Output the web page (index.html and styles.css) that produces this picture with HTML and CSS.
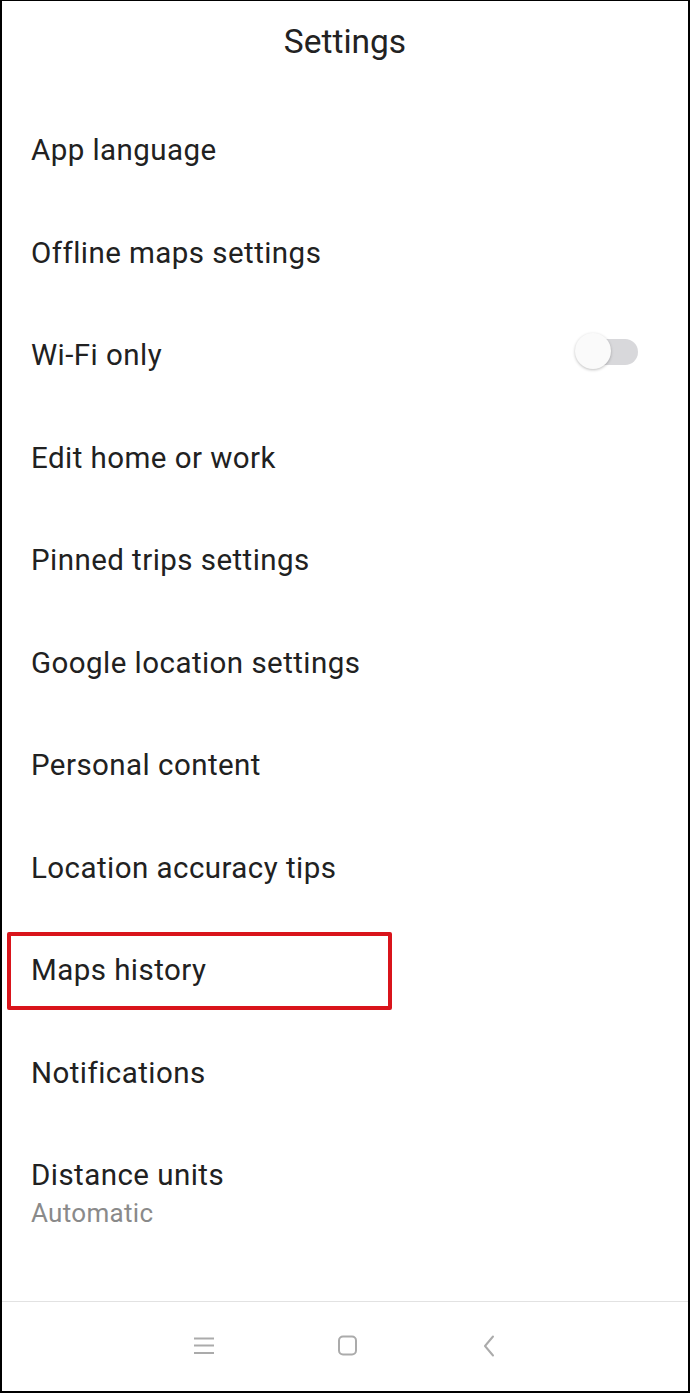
FILE: index.html
```html
<!DOCTYPE html>
<html lang="en">
<head>
<meta charset="utf-8">
<title>Settings</title>
<link rel="stylesheet" href="styles.css">
</head>
<body>
<div class="screen">
  <header class="header">
    <h1 class="title">Settings</h1>
  </header>
  <ul class="list">
    <li class="row"><span class="label">App language</span></li>
    <li class="row"><span class="label">Offline maps settings</span></li>
    <li class="row">
      <span class="label">Wi-Fi only</span>
      <span class="toggle"><span class="track"></span><span class="knob"></span></span>
    </li>
    <li class="row"><span class="label">Edit home or work</span></li>
    <li class="row"><span class="label">Pinned trips settings</span></li>
    <li class="row"><span class="label">Google location settings</span></li>
    <li class="row"><span class="label">Personal content</span></li>
    <li class="row"><span class="label">Location accuracy tips</span></li>
    <li class="row row-highlight"><span class="label">Maps history</span></li>
    <li class="row"><span class="label">Notifications</span></li>
    <li class="row row-two">
      <span class="label">Distance units</span>
      <span class="sub">Automatic</span>
    </li>
  </ul>
  <nav class="navbar">
    <svg class="nav-icon" width="22" height="20" viewBox="0 0 22 20">
      <path d="M1 2.5H21M1 9.5H21M1 17H21" stroke="#ababab" stroke-width="1.8" fill="none"/>
    </svg>
    <svg class="nav-icon" width="22" height="22" viewBox="0 0 22 22">
      <rect x="2" y="1.5" width="17" height="18" rx="4" stroke="#ababab" stroke-width="2" fill="none"/>
    </svg>
    <svg class="nav-icon" width="16" height="22" viewBox="0 0 16 22">
      <path d="M12 1.5L4 11L12 20.5" stroke="#ababab" stroke-width="2" fill="none" stroke-linecap="round" stroke-linejoin="round"/>
    </svg>
  </nav>
</div>
</body>
</html>
```

FILE: styles.css
```css
*, *::before, *::after { box-sizing: border-box; }
html, body { margin: 0; padding: 0; background: #fff; }
.screen {
  width: 690px;
  height: 1393px;
  border: 2px solid #000;
  border-top-width: 1px;
  display: flex;
  flex-direction: column;
  background: #fff;
  font-family: Roboto, "Noto Sans", sans-serif;
  color: #212121;
}
.header {
  height: 98px;
  display: flex;
  justify-content: center;
  padding-top: 21px;
}
.title {
  margin: 0;
  font-family: Roboto, sans-serif;
  font-weight: 400;
  font-size: 33.5px;
  line-height: 40px;
  color: #222;
}
.list {
  list-style: none;
  margin: 0;
  padding: 0;
}
.row {
  height: 102.5px;
  display: flex;
  align-items: center;
  padding: 0 50px 0 29px;
  position: relative;
}
.label {
  font-size: 29.5px;
  line-height: 36px;
  letter-spacing: 0.45px;
  color: #212121;
}
.row-highlight::after {
  content: "";
  position: absolute;
  left: 5px;
  top: 13px;
  width: 385px;
  height: 78px;
  border: 4px solid #d9141b;
  border-radius: 2px;
}
.row-two {
  flex-direction: column;
  align-items: flex-start;
  justify-content: flex-start;
  height: auto;
  padding-top: 33px;
}
.sub {
  font-size: 26px;
  line-height: 34px;
  letter-spacing: 0.3px;
  color: #8a8a8a;
  margin-top: 3px;
}
.toggle {
  margin-left: auto;
  position: relative;
  width: 64px;
  height: 40px;
  margin-top: -6px;
}
.track {
  position: absolute;
  right: 0;
  top: 7px;
  width: 56px;
  height: 26px;
  border-radius: 13px;
  background: #d8d8db;
}
.knob {
  position: absolute;
  left: 1px;
  top: 1px;
  width: 36px;
  height: 36px;
  border-radius: 50%;
  background: #fafafa;
  box-shadow: 0 1px 3px rgba(0,0,0,0.25);
}
.navbar {
  margin-top: auto;
  height: 90px;
  border-top: 1px solid #e2e2e2;
  display: flex;
  align-items: center;
  justify-content: center;
  gap: 122px;
  padding-bottom: 2px;
}
.nav-icon { display: block; }
```
